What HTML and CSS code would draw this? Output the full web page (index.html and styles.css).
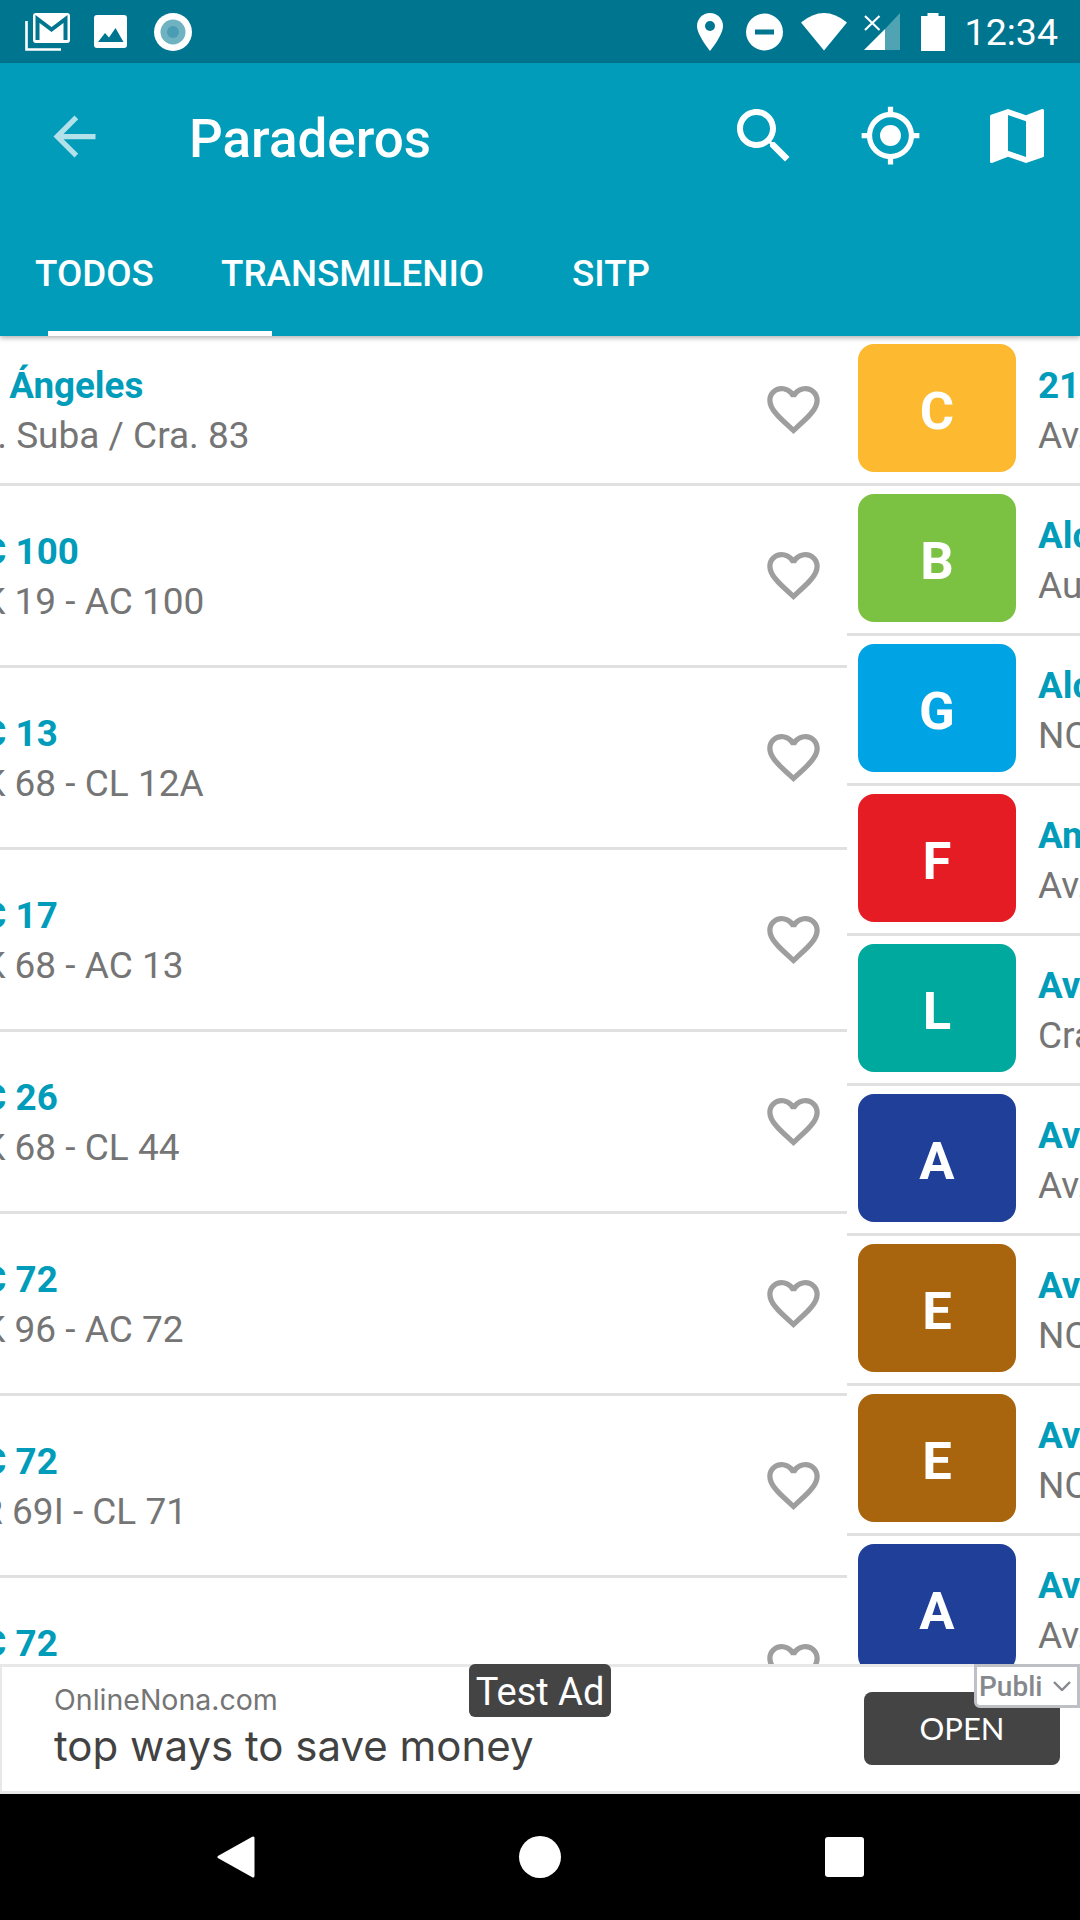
FILE: index.html
```html
<!DOCTYPE html>
<html lang="es">
<head>
    <meta charset="UTF-8">
    <meta name="viewport" content="width=device-width, initial-scale=1.0">
    <title>Paraderos</title>
    <link rel="stylesheet" href="styles.css">
</head>
<body>
<div class="app">
    <!-- status bar -->
    <div class="status-bar">
        <svg class="ic-gmail" width="45" height="38" viewBox="0 0 45 38"><path d="M1.5 8V36.5H36" fill="none" stroke="#fff" stroke-width="2.6"/><rect x="8" width="37" height="30" rx="3" fill="#fff"/><path d="M12.5 27V6L26.5 16.5L40.5 6V27" fill="none" stroke="#00758f" stroke-width="4"/></svg>
        <svg class="ic-photo" width="33" height="33" viewBox="0 0 33 33"><rect width="33" height="33" rx="3" fill="#fff"/><path d="M4 27L11 18L15 22.5L21.5 13L29.5 27Z" fill="#00758f"/></svg>
        <svg class="ic-record" width="38" height="38" viewBox="0 0 38 38"><circle cx="19" cy="19" r="19" fill="#fff"/><circle cx="19" cy="19" r="12.5" fill="#6fb3c2"/><circle cx="19" cy="19" r="6" fill="#4a9db2"/></svg>
        <div class="status-right">
            <svg class="ic-pin" width="26" height="38" viewBox="0 0 26 38"><path d="M13 0C5.8 0 0 5.8 0 13C0 22 13 38 13 38C13 38 26 22 26 13C26 5.8 20.2 0 13 0Z" fill="#fff"/><circle cx="13" cy="13" r="5" fill="#00758f"/></svg>
            <svg class="ic-dnd" width="37" height="38" viewBox="0 0 37 38"><circle cx="18.5" cy="19" r="18.5" fill="#fff"/><rect x="9" y="16.5" width="19" height="5" fill="#00758f"/></svg>
            <svg class="ic-wifi" width="46" height="38" viewBox="0 0 46 38"><path d="M0 9.5Q23 -9.5 46 9.5L23 37.5Z" fill="#fff"/></svg>
            <svg class="ic-signal" width="37" height="38" viewBox="0 0 37 38"><path d="M22 16L37 0V37H22Z" fill="#4fa3b3"/><path d="M1 37L22 16V37Z" fill="#fff"/><path d="M2 3L16.5 17M16.5 3L2 17" stroke="#fff" stroke-width="2.2"/></svg>
            <svg class="ic-battery" width="24" height="38" viewBox="0 0 24 38"><path d="M6.5 0H17.5V3H24V38H0V3H6.5Z" fill="#fff"/></svg>
            <span class="clock">12:34</span>
        </div>
    </div>

    <!-- app bar with tabs -->
    <header class="app-bar">
        <div class="toolbar">
            <svg class="back" width="63" height="63" viewBox="0 0 24 24"><path d="M20 11H7.83l5.59-5.59L12 4l-8 8 8 8 1.41-1.41L7.83 13H20v-2z" fill="#fff"/></svg>
            <h1 class="title">Paraderos</h1>
            <div class="actions">
                <svg width="72" height="72" viewBox="0 0 24 24"><path d="M15.5 14h-.79l-.28-.27C15.41 12.59 16 11.11 16 9.5 16 5.91 13.09 3 9.5 3S3 5.91 3 9.5 5.91 16 9.5 16c1.61 0 3.09-.59 4.23-1.57l.27.28v.79l5 4.99L20.49 19l-4.99-5zm-6 0C7.01 14 5 11.99 5 9.5S7.01 5 9.5 5 14 7.01 14 9.5 11.99 14 9.5 14z" fill="#fff"/></svg>
                <svg width="63" height="63" viewBox="0 0 24 24"><path d="M12 8c-2.21 0-4 1.79-4 4s1.79 4 4 4 4-1.79 4-4-1.79-4-4-4zm8.94 3c-.46-4.17-3.77-7.48-7.94-7.94V1h-2v2.06C6.83 3.52 3.52 6.83 3.06 11H1v2h2.06c.46 4.17 3.77 7.48 7.94 7.94V23h2v-2.06c4.17-.46 7.48-3.77 7.94-7.94H23v-2h-2.06zM12 19c-3.87 0-7-3.13-7-7s3.13-7 7-7 7 3.13 7 7-3.13 7-7 7z" fill="#fff"/></svg>
                <svg width="72" height="72" viewBox="0 0 24 24"><path d="M20.5 3l-.16.03L15 5.1 9 3 3.36 4.9c-.21.07-.36.25-.36.48V20.5c0 .28.22.5.5.5l.16-.03L9 18.9l6 2.1 5.64-1.9c.21-.07.36-.25.36-.48V3.5c0-.28-.22-.5-.5-.5zM15 19l-6-2.11V5l6 2.11V19z" fill="#fff"/></svg>
            </div>
        </div>
        <nav class="tabs">
            <span class="tab">TODOS</span>
            <span class="tab">TRANSMILENIO</span>
            <span class="tab">SITP</span>
        </nav>
        <div class="tab-indicator"></div>
    </header>

    <!-- the two pages sit side by side, caught in the middle of a swipe -->
    <main class="pager">
        <section class="page page-stops">
            <div class="stop stop-first"><div class="stop-text"><div class="stop-name">21 Ángeles</div><div class="stop-addr">Av. Suba / Cra. 83</div></div><svg class="heart" viewBox="0 0 24 24"><use href="#heart"/></svg></div>
            <div class="stop"><div class="stop-text"><div class="stop-name">AC 100</div><div class="stop-addr">AK 19 - AC 100</div></div><svg class="heart" viewBox="0 0 24 24"><use href="#heart"/></svg></div>
            <div class="stop"><div class="stop-text"><div class="stop-name">AC 13</div><div class="stop-addr">AK 68 - CL 12A</div></div><svg class="heart" viewBox="0 0 24 24"><use href="#heart"/></svg></div>
            <div class="stop"><div class="stop-text"><div class="stop-name">AC 17</div><div class="stop-addr">AK 68 - AC 13</div></div><svg class="heart" viewBox="0 0 24 24"><use href="#heart"/></svg></div>
            <div class="stop"><div class="stop-text"><div class="stop-name">AC 26</div><div class="stop-addr">AK 68 - CL 44</div></div><svg class="heart" viewBox="0 0 24 24"><use href="#heart"/></svg></div>
            <div class="stop"><div class="stop-text"><div class="stop-name">AC 72</div><div class="stop-addr">AK 96 - AC 72</div></div><svg class="heart" viewBox="0 0 24 24"><use href="#heart"/></svg></div>
            <div class="stop"><div class="stop-text"><div class="stop-name">AC 72</div><div class="stop-addr">TR 69I - CL 71</div></div><svg class="heart" viewBox="0 0 24 24"><use href="#heart"/></svg></div>
            <div class="stop"><div class="stop-text"><div class="stop-name">AC 72</div><div class="stop-addr">AK 50 - AC 72</div></div><svg class="heart" viewBox="0 0 24 24"><use href="#heart"/></svg></div>
        </section>
        <section class="page page-stations">
            <div class="station"><div class="badge zone-c">C</div><div class="stop-text"><div class="stop-name">21 Ángeles</div><div class="stop-addr">Av. Suba</div></div></div>
            <div class="station"><div class="badge zone-b">B</div><div class="stop-text"><div class="stop-name">Alcalá</div><div class="stop-addr">Autopista Norte</div></div></div>
            <div class="station"><div class="badge zone-g">G</div><div class="stop-text"><div class="stop-name">Alcalá</div><div class="stop-addr">NQS</div></div></div>
            <div class="station"><div class="badge zone-f">F</div><div class="stop-text"><div class="stop-name">Américas</div><div class="stop-addr">Av. Américas</div></div></div>
            <div class="station"><div class="badge zone-l">L</div><div class="stop-text"><div class="stop-name">Av. 1 de Mayo</div><div class="stop-addr">Cra. 10</div></div></div>
            <div class="station"><div class="badge zone-a">A</div><div class="stop-text"><div class="stop-name">Av. 39</div><div class="stop-addr">Av. Caracas</div></div></div>
            <div class="station"><div class="badge zone-e">E</div><div class="stop-text"><div class="stop-name">Av. 68</div><div class="stop-addr">NQS</div></div></div>
            <div class="station"><div class="badge zone-e">E</div><div class="stop-text"><div class="stop-name">Av. Cali</div><div class="stop-addr">NQS</div></div></div>
            <div class="station"><div class="badge zone-a">A</div><div class="stop-text"><div class="stop-name">Av. Jiménez</div><div class="stop-addr">Av. Caracas</div></div></div>
        </section>
    </main>

    <!-- test ad -->
    <aside class="ad">
        <div class="ad-text">
            <div class="ad-site">OnlineNona.com</div>
            <div class="ad-head">top ways to save money</div>
        </div>
        <div class="ad-open">OPEN</div>
        <div class="ad-label">Test Ad</div>
        <div class="ad-choice"><span class="ad-choice-text">Publi</span><svg width="18" height="10" viewBox="0 0 18 10"><path d="M1 1L9 9L17 1" fill="none" stroke="#85898e" stroke-width="2.4"/></svg></div>
    </aside>

    <!-- android nav -->
    <div class="nav-bar">
        <svg width="38" height="42" viewBox="0 0 38 42"><path d="M36 2V40L2 21Z" fill="#fff" stroke="#fff" stroke-width="3" stroke-linejoin="round"/></svg>
        <div class="nav-home"></div>
        <div class="nav-recent"></div>
    </div>
</div>

<svg class="defs" width="0" height="0"><defs><path id="heart" d="M16.5 3c-1.74 0-3.41.81-4.5 2.09C10.91 3.81 9.24 3 7.5 3 4.42 3 2 5.42 2 8.5c0 3.78 3.4 6.86 8.55 11.54L12 21.35l1.45-1.32C18.6 15.36 22 12.28 22 8.5 22 5.42 19.58 3 16.5 3zm-4.4 15.55l-.1.1-.1-.1C7.14 14.24 4 11.39 4 8.5 4 6.5 5.5 5 7.5 5c1.54 0 3.04.99 3.57 2.36h1.87C13.46 5.99 14.96 5 16.5 5c2 0 3.5 1.5 3.5 3.5 0 2.89-3.14 5.74-7.9 10.05z"/></defs></svg>
</body>
</html>
```

FILE: styles.css
```css
body{
    margin: 0;
    background-color: white;
    font-family: Roboto, sans-serif;
}
.app{
    width: 1080px;
    height: 1920px;
    display: flex;
    flex-direction: column;
    overflow: hidden;
}
.defs{
    display: block;
    height: 0;
}

/* status bar */
.status-bar{
    height: 63px;
    flex: none;
    display: flex;
    align-items: center;
    padding-left: 25px;
    box-sizing: border-box;
    background-color: #00758f;
}
.ic-photo{margin-left: 24px;}
.ic-record{margin-left: 27px;}
.status-right{
    margin-left: auto;
    display: flex;
    align-items: center;
    padding-right: 22px;
}
.ic-dnd{margin-left: 23px;}
.ic-wifi{margin-left: 18px;}
.ic-signal{margin-left: 16px;}
.ic-battery{margin-left: 21px;}
.clock{
    margin-left: 20px;
    color: white;
    font-size: 37.5px;
    line-height: 40px;
}

/* app bar */
.app-bar{
    height: 273px;
    flex: none;
    z-index: 2;
    background-color: #009cba;
    box-shadow: 0 2px 5px rgba(0,0,0,.3);
    color: white;
}
.toolbar{
    height: 146px;
    display: flex;
    align-items: center;
    padding: 0 27px 0 43px;
}
.back{opacity: .7;}
.title{
    flex: 1;
    margin: 5px 0 0 83px;
    font-size: 53px;
    font-weight: 500;
}
.actions{
    display: flex;
    align-items: center;
    gap: 59px;
    margin-top: -1px;
}
.tabs{
    height: 122px;
    box-sizing: border-box;
    display: grid;
    grid-template-columns: 186px 351px auto;
    align-items: center;
    padding: 7px 0 0 35px;
    font-size: 36.75px;
    font-weight: 500;
}
.tab-indicator{
    width: 224px;
    height: 5px;
    margin-left: 48px;
    background-color: white;
}

/* pager */
.pager{
    flex: 1 1 0;
    min-height: 0;
    display: flex;
    margin-left: -233px;
    overflow: hidden;
}
.page{
    width: 1080px;
    flex: none;
}
.stop, .station{
    box-sizing: border-box;
    display: flex;
    align-items: center;
    border-bottom: 3px solid #e0e0e0;
}
.stop{
    height: 182px;
    padding: 0 22px 0 191px;
}
.stop-first{height: 150px;}
.station{
    height: 150px;
    padding-left: 11px;
    white-space: nowrap;
}
.stop-text{
    flex: 1;
    padding-top: 2px;
}
.stop-name{
    color: #009cba;
    font-size: 36.75px;
    font-weight: 700;
    line-height: 50px;
}
.stop-addr{
    color: #757575;
    font-size: 37px;
    line-height: 50px;
}
.heart{
    width: 63px;
    height: 63px;
    fill: #9e9e9e;
}
.badge{
    width: 158px;
    height: 128px;
    flex: none;
    margin: -4px 22px 0 0;
    border-radius: 16px;
    color: white;
    font-size: 52.5px;
    font-weight: 700;
    line-height: 134px;
    text-align: center;
}
.zone-a{background-color: #1f3f99;}
.zone-b{background-color: #7cc242;}
.zone-c{background-color: #fdb92f;}
.zone-e{background-color: #a9640e;}
.zone-f{background-color: #e61c24;}
.zone-g{background-color: #00a3e4;}
.zone-l{background-color: #00a99d;}

/* ad */
.ad{
    height: 130px;
    flex: none;
    position: relative;
    box-sizing: border-box;
    display: flex;
    align-items: center;
    padding: 0 20px 0 52px;
    border: 3px solid #e8e8e8;
    border-width: 3px 0 3px 2px;
    background-color: white;
    z-index: 1;
}
.ad-text{
    flex: 1;
    margin-top: -7px;
    font-family: Inter, sans-serif;
}
.ad-site{
    color: #757575;
    font-size: 28.5px;
    line-height: 40px;
}
.ad-head{
    color: #424242;
    font-size: 42px;
    line-height: 52px;
}
.ad-open{
    width: 196px;
    height: 73px;
    margin-top: -2px;
    border-radius: 8px;
    background-color: #444;
    color: white;
    font-family: Lato, sans-serif;
    font-size: 31px;
    line-height: 73px;
    text-align: center;
}
.ad-label{
    position: absolute;
    top: -3px;
    left: 467px;
    width: 142px;
    height: 53px;
    border-radius: 6px;
    background-color: #444;
    color: white;
    font-size: 38px;
    line-height: 56px;
    text-align: center;
}
.ad-choice{
    position: absolute;
    top: -3px;
    right: 0;
    width: 106px;
    height: 44px;
    box-sizing: border-box;
    display: flex;
    align-items: center;
    padding-left: 2px;
    border: 3px solid #bdc1c6;
    border-radius: 0 0 0 6px;
    background-color: white;
}
.ad-choice-text{
    width: 74px;
    color: #85898e;
    font-size: 28px;
    font-weight: 500;
}

/* android nav */
.nav-bar{
    height: 126px;
    flex: none;
    display: flex;
    align-items: center;
    gap: 264px;
    padding: 0 0 0 217px;
    background-color: black;
}
.nav-home{
    width: 42px;
    height: 42px;
    border-radius: 50%;
    background-color: white;
}
.nav-recent{
    width: 39px;
    height: 40px;
    border-radius: 3px;
    background-color: white;
}
```
